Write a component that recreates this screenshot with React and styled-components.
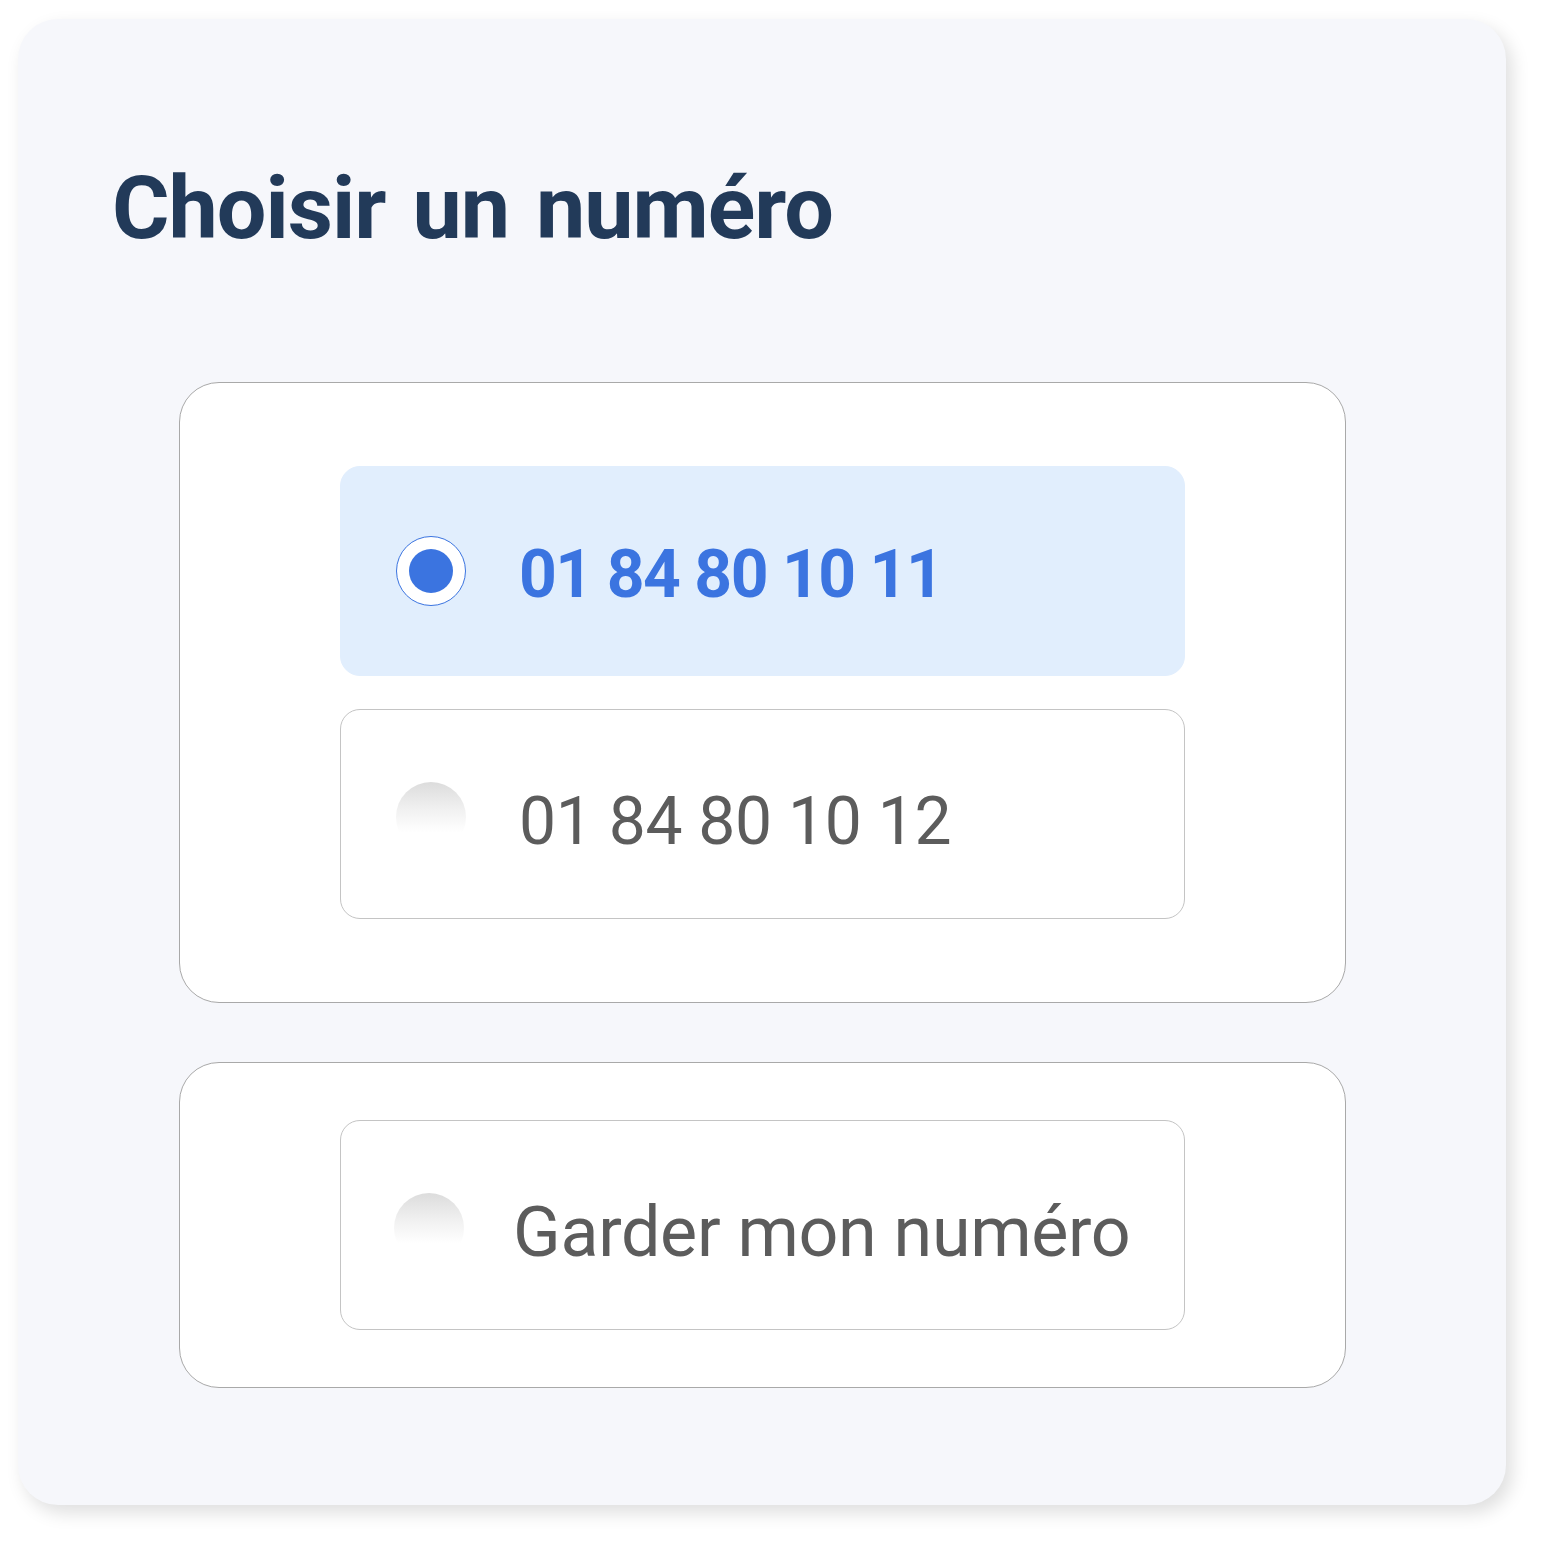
import React, { useState } from 'react';
import styled, { createGlobalStyle } from 'styled-components';

const GlobalStyle = createGlobalStyle`
  html, body {
    margin: 0;
    padding: 0;
    background: #ffffff;
  }
  * {
    box-sizing: border-box;
  }
`;

const Page = styled.div`
  width: 1541px;
  height: 1541px;
  padding: 19px 35px 36px 18px;
`;

const Card = styled.div`
  width: 1488px;
  height: 1486px;
  background: #f6f7fb;
  border-radius: 40px;
  box-shadow: 6px 8px 18px rgba(0, 0, 0, 0.13);
  padding: 0 160px 0 161px;
  display: flex;
  flex-direction: column;
`;

const Title = styled.h1`
  margin: 145px 0 0 -67px;
  height: 218px;
  font-family: Roboto, "Liberation Sans", sans-serif;
  font-weight: 700;
  font-size: 88px;
  line-height: 88px;
  letter-spacing: -1px;
  word-spacing: 6px;
  color: #223a59;
`;

const Group = styled.div`
  background: #ffffff;
  border: 1px solid #a9a9a9;
  border-radius: 40px;
  padding: ${p => p.$pad}px 160px;
  display: flex;
  flex-direction: column;
  gap: 33px;
  margin-bottom: 59px;
`;

const Option = styled.label`
  height: 210px;
  border-radius: 20px;
  background: ${p => (p.$selected ? '#e1eefd' : '#ffffff')};
  border: 1px solid ${p => (p.$selected ? '#e1eefd' : '#c4c4c4')};
  display: flex;
  align-items: center;
  padding-left: ${p => p.$inset}px;
  gap: ${p => p.$gap}px;
  cursor: pointer;
`;

const Radio = styled.span`
  width: 70px;
  height: 70px;
  border-radius: 50%;
  flex-shrink: 0;
  margin-top: ${p => (p.$checked ? 0 : 6)}px;
  background: ${p => (p.$checked ? '#ffffff' : 'linear-gradient(180deg, #dcdcdc 0%, #f1f1f1 40%, #ffffff 72%)')};
  border: ${p => (p.$checked ? '1.5px solid #3b74e0' : 'none')};
  display: flex;
  align-items: center;
  justify-content: center;

  &::after {
    content: '';
    display: ${p => (p.$checked ? 'block' : 'none')};
    width: 44px;
    height: 44px;
    border-radius: 50%;
    background: #3b74e0;
  }
`;

const Label = styled.span`
  font-family: Roboto, "Liberation Sans", sans-serif;
  font-size: ${p => p.$size}px;
  font-weight: ${p => (p.$selected ? 700 : 400)};
  letter-spacing: ${p => (p.$selected ? '-1.5px' : '-0.3px')};
  color: ${p => (p.$selected ? '#3b74e0' : '#5c5c5c')};
  line-height: 1;
  margin-top: ${p => p.$shift}px;
`;

const numbers = ['01 84 80 10 11', '01 84 80 10 12'];

export default function App() {
  const [choice, setChoice] = useState(numbers[0]);

  return (
    <>
      <GlobalStyle />
      <Page>
        <Card>
          <Title>Choisir un numéro</Title>
          <Group $pad={83}>
            {numbers.map(n => (
              <Option
                key={n}
                $selected={choice === n}
                $inset={55}
                $gap={53}
                onClick={() => setChoice(n)}
              >
                <Radio $checked={choice === n} />
                <Label
                  $selected={choice === n}
                  $size={66}
                  $shift={choice === n ? 7 : 15}
                >
                  {n}
                </Label>
              </Option>
            ))}
          </Group>
          <Group $pad={57}>
            <Option
              $selected={choice === 'keep'}
              $inset={53}
              $gap={49}
              onClick={() => setChoice('keep')}
            >
              <Radio $checked={choice === 'keep'} />
              <Label $selected={choice === 'keep'} $size={70} $shift={14}>
                Garder mon numéro
              </Label>
            </Option>
          </Group>
        </Card>
      </Page>
    </>
  );
}
